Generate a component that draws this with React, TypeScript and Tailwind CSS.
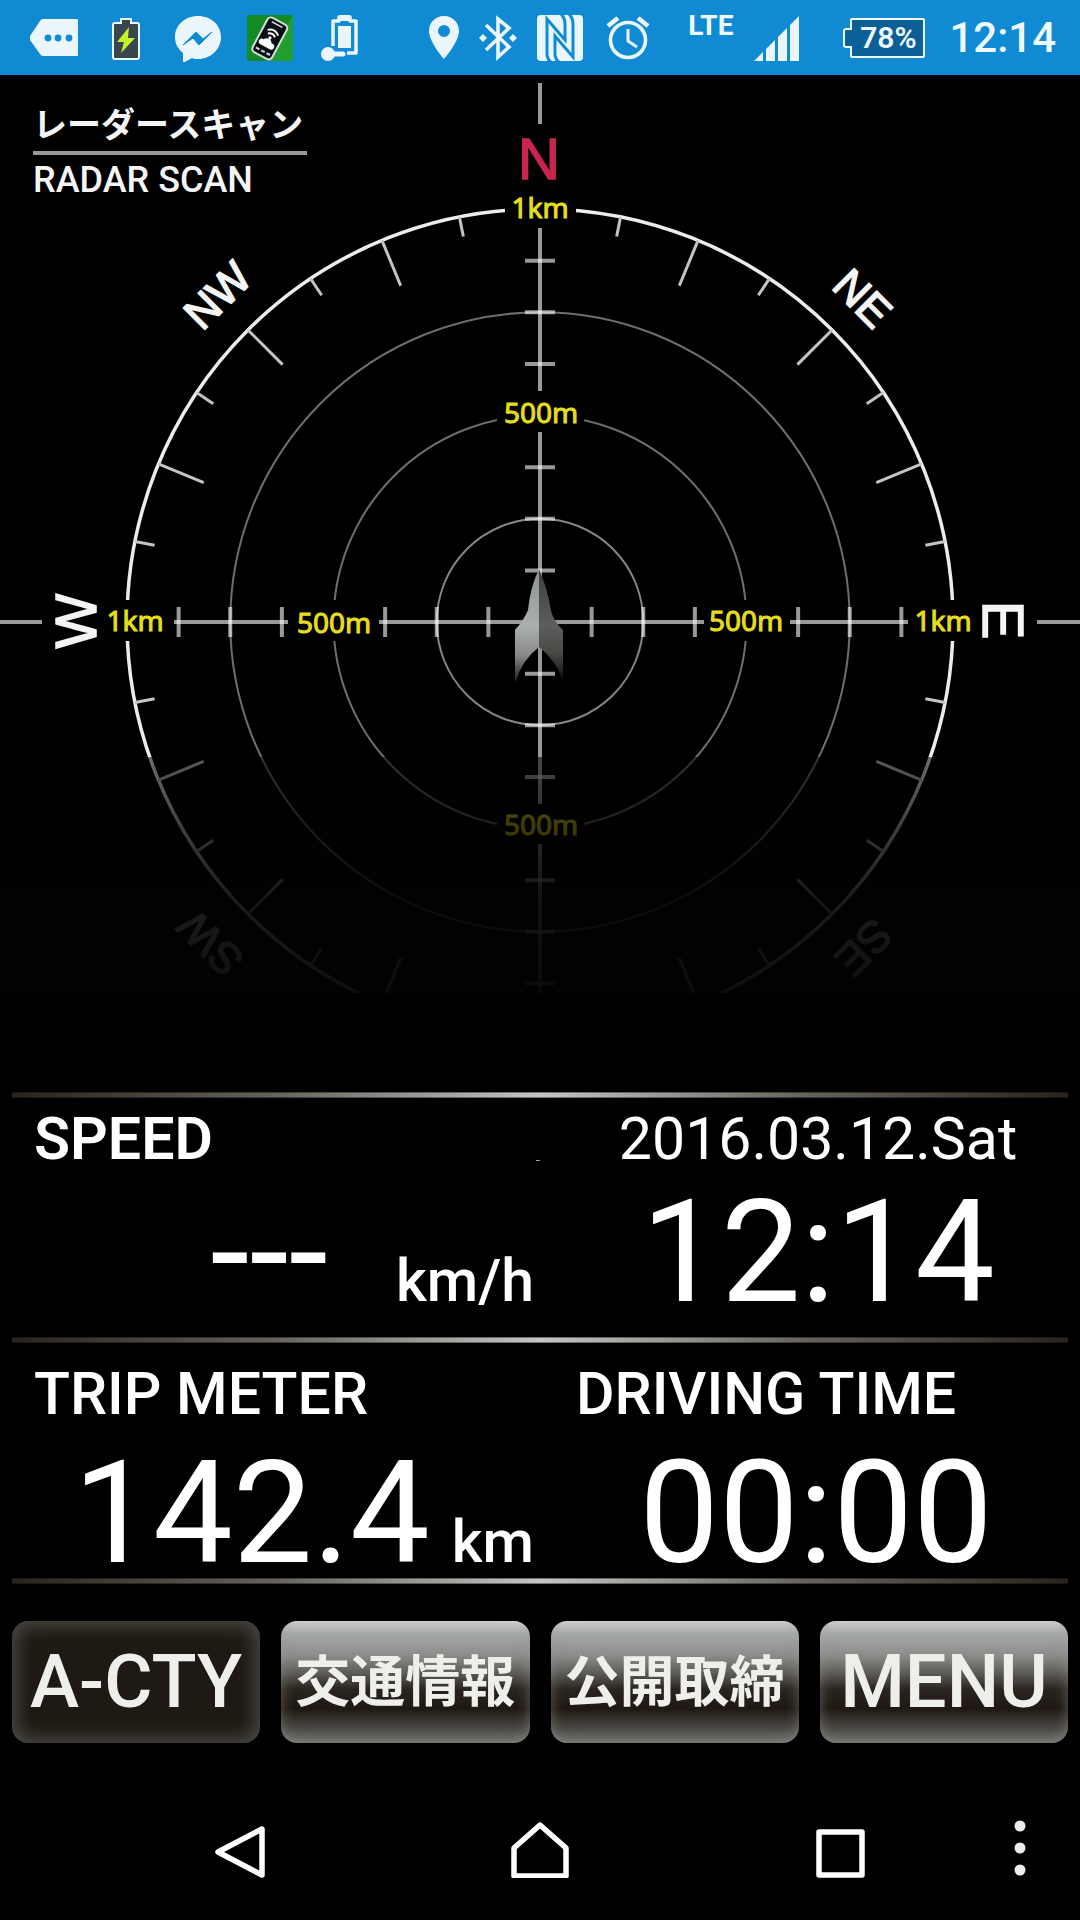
import { ReactNode } from 'react'

interface IconProps {
  children: ReactNode
  className?: string
}

const CX = 540
const CY = 622
const UNIT = 413 / 8

// Compass ticks between the four axes, every 11.25 degrees
const ringTicks = Array.from({ length: 32 }, (_, i) => i).filter(i => i % 8 !== 0)

// Range steps on each axis; step 4 and step 8 carry a label instead
const axisSteps = [1, 2, 3, 5, 6, 7]

const labelGaps = [
  { x: 505, y: 190, w: 71, h: 38 },
  { x: 497, y: 391, w: 87, h: 41 },
  { x: 497, y: 804, w: 87, h: 40 },
  { x: 42, y: 600, w: 132, h: 41 },
  { x: 288, y: 600, w: 91, h: 41 },
  { x: 704, y: 600, w: 86, h: 41 },
  { x: 908, y: 600, w: 129, h: 41 },
]

const rangeLabels = [
  { x: 540, y: 218, text: '1km' },
  { x: 541, y: 423, text: '500m' },
  { x: 541, y: 835, text: '500m' },
  { x: 135, y: 631, text: '1km' },
  { x: 334, y: 633, text: '500m' },
  { x: 746, y: 631, text: '500m' },
  { x: 943, y: 631, text: '1km' },
]

const headings = [
  { x: 75, y: 621, rotate: -90, size: 58, text: 'W' },
  { x: 1004, y: 620, rotate: 90, size: 58, text: 'E' },
  { x: 217, y: 295, rotate: -45, size: 44, text: 'NW' },
  { x: 863, y: 298, rotate: 45, size: 44, text: 'NE' },
  { x: 210, y: 944, rotate: -135, size: 44, text: 'SW' },
  { x: 864, y: 948, rotate: 135, size: 44, text: 'SE' },
]

function StatusIcon({ children, className = '' }: IconProps) {
  return (
    <svg viewBox="0 0 48 48" fill="#eaf6fc" className={`w-12 h-12 flex-shrink-0 ${className}`}>
      {children}
    </svg>
  )
}

function StatusBar() {
  return (
    <header className="flex items-center h-[75px] pl-[30px] pr-6 bg-[#108bd3] text-[#eef8fd]">
      <div className="flex items-center gap-6">
        {/* More notifications */}
        <StatusIcon>
          <path d="M13 5h33q3 0 3 3v31q0 3-3 3H13q-2 0-3-2L0 26q-1-2 0-4L10 7q1-2 3-2z" />
          <g fill="#108bd3">
            <circle cx="18" cy="24" r="3.4" />
            <circle cx="28" cy="24" r="3.4" />
            <circle cx="39" cy="24" r="3.4" />
          </g>
        </StatusIcon>
        {/* Charging */}
        <StatusIcon>
          <path d="M18 4h12v4h5q3 0 3 3v32q0 3-3 3H13q-3 0-3-3V11q0-3 3-3h5z" />
          <path d="M20 6h8v4h7q1 0 1 1v32q0 1-1 1H13q-1 0-1-1V11q0-1 1-1h7z" fill="#3a464d" />
          <path d="M27 13L15 28h7l-3 11 14-15h-7z" fill="#c5f02c" />
        </StatusIcon>
        {/* Messenger */}
        <StatusIcon>
          <path d="M24 2C11 2 1 11 1 23c0 7 3 12 8 16v10l9-5c2 1 4 1 6 1 13 0 23-10 23-22S37 2 24 2z" />
          <path d="M9 31l13-13 7 7 9-7-13 13-6-7z" fill="#108bd3" stroke="#108bd3" strokeWidth="1" />
        </StatusIcon>
        {/* Tethering app */}
        <StatusIcon>
          <rect x="1" y="1" width="46" height="46" rx="3" fill="#148a24" />
          <path d="M47 1v46H22z" fill="#2fb23a" opacity=".5" />
          <g transform="rotate(28 24 24)">
            <rect x="13" y="5" width="22" height="39" rx="4" fill="#0a0f14" stroke="#d4dcd8" strokeWidth="2" />
            <rect x="18" y="8" width="12" height="1.500" fill="#d4dcd8" />
            <path d="M18 18q6-5 12 0M20 21q4-3 8 0" fill="none" stroke="#fff" strokeWidth="2" />
            <circle cx="24" cy="24" r="1.600" />
            <path d="M18 34a3 3 0 0 1 1-6 5 5 0 0 1 9 0 3 3 0 0 1 2 6z" fill="#fff" />
            <path d="M16 39h4M22 39h4M28 39h4" stroke="#d4dcd8" strokeWidth="2" />
          </g>
        </StatusIcon>
        {/* Battery saver */}
        <StatusIcon>
          <path d="M15 32V7h6V3h11v4h6v32h-9" fill="none" stroke="#eaf6fc" strokeWidth="3.500" strokeLinejoin="round" />
          <rect x="21" y="1" width="11" height="6" rx="1" />
          <rect x="20" y="12" width="13" height="22" />
          <circle cx="10" cy="40" r="7" />
          <path d="M10 40h15" stroke="#eaf6fc" strokeWidth="5" strokeLinecap="round" />
        </StatusIcon>
      </div>

      <div className="flex items-center ml-auto">
        {/* Location */}
        <StatusIcon>
          <path
            fillRule="evenodd"
            d="M24 2C15 2 9 9 9 17c0 11 15 28 15 28s15-17 15-28C39 9 33 2 24 2zm0 9a6 6 0 1 1 0 12 6 6 0 0 1 0-12z"
          />
        </StatusIcon>
        {/* Bluetooth */}
        <StatusIcon className="ml-1.5">
          <path d="M12 11l23 22-11 10V5l11 9-23 22" fill="none" stroke="#eaf6fc" strokeWidth="3.600" />
          <path d="M9 20l4 4-4 4-4-4zM39 20l4 4-4 4-4-4z" />
        </StatusIcon>
        {/* NFC */}
        <StatusIcon className="ml-3.5">
          <rect x="1" y="1" width="46" height="46" rx="4" />
          <path
            d="M15 48q-4-3-4-8V5l18 21V10q0-6-4-10M33 0q4 4 4 10v33L19 22v18q0 5 4 8"
            fill="none"
            stroke="#108bd3"
            strokeWidth="3"
          />
        </StatusIcon>
        {/* Alarm */}
        <StatusIcon className="ml-5">
          <circle cx="24" cy="26" r="17.500" fill="none" stroke="#eaf6fc" strokeWidth="3.600" />
          <path d="M24 15v12l9 6" fill="none" stroke="#eaf6fc" strokeWidth="3" />
          <path d="M4 12l10-8M44 12L34 4" stroke="#eaf6fc" strokeWidth="4.500" />
        </StatusIcon>
        <span className="ml-9 mb-6 text-[28px] leading-[28px] font-bold">LTE</span>
        {/* Signal */}
        <StatusIcon className="ml-5">
          <path d="M1 47l9-9v9zM13 35l9-9v21H13zM25 23l9-9v33H25zM37 11l9-9v45H37z" />
        </StatusIcon>
        <div className="relative flex items-center justify-center w-[82px] h-10 pl-2 ml-[42px]">
          <svg viewBox="0 0 82 40" className="absolute inset-0" fill="#0a5f96" stroke="#eef8fd" strokeWidth="2">
            <path d="M8 2q0-1 1-1h71q1 0 1 1v36q0 1-1 1H9q-1 0-1-1V29H3q-2 0-2-2V13q0-2 2-2h5z" />
          </svg>
          <span className="relative text-[30px] leading-[30px] font-semibold">78%</span>
        </div>
        <time className="ml-6 text-[42px] leading-[42px] font-medium">12:14</time>
      </div>
    </header>
  )
}

function Radar() {
  return (
    <section className="relative">
      <div className="absolute left-[33px] top-6 w-[274px] font-medium text-[#f4f4f4]">
        <h1 className="pb-1 text-[34px] leading-[48px] font-bold whitespace-nowrap border-b-4 border-[#999] font-['Noto_Sans_CJK_JP',sans-serif]">
          レーダースキャン
        </h1>
        <p className="pt-1 text-[36px] leading-[42px]">RADAR SCAN</p>
      </div>

      <svg viewBox="0 75 1080 918" className="block w-full" textAnchor="middle">
        <defs>
          <linearGradient id="fade" x1="0" y1="0" x2="0" y2="1">
            <stop offset="0" stopColor="#030101" stopOpacity=".55" />
            <stop offset=".3" stopColor="#030101" stopOpacity=".74" />
            <stop offset=".6" stopColor="#030101" stopOpacity=".89" />
            <stop offset="1" stopColor="#030101" stopOpacity=".95" />
          </linearGradient>
          <linearGradient id="hullLeft" x1="0" y1="0" x2="0" y2="1">
            <stop offset="0" stopColor="#8d928f" />
            <stop offset=".5" stopColor="#a9b0ad" />
            <stop offset=".75" stopColor="#8b8b89" />
            <stop offset="1" stopColor="#1c1815" />
          </linearGradient>
          <linearGradient id="hullRight" x1="0" y1="0" x2="0" y2="1">
            <stop offset="0" stopColor="#3f3f3c" />
            <stop offset=".5" stopColor="#5c5e5c" />
            <stop offset=".75" stopColor="#4a4946" />
            <stop offset="1" stopColor="#0c0a08" />
          </linearGradient>
        </defs>

        {/* Range rings */}
        <g fill="none">
          <circle cx={CX} cy={CY} r={UNIT * 8} stroke="#ececec" strokeWidth="3.500" />
          <g stroke="#6e6e6e" strokeWidth="2">
            <circle cx={CX} cy={CY} r={UNIT * 6} />
            <circle cx={CX} cy={CY} r={UNIT * 4} />
            <circle cx={CX} cy={CY} r={UNIT * 2} stroke="#858585" />
          </g>
        </g>
        <g stroke="#c4c4c4" strokeWidth="3">
          {ringTicks.map(i => (
            <line
              key={i}
              x1={CX}
              x2={CX}
              y1={CY - UNIT * 8}
              y2={CY - UNIT * 8 + (i % 2 === 0 ? 49 : 20)}
              transform={`rotate(${i * 11.25} ${CX} ${CY})`}
            />
          ))}
        </g>
        {labelGaps.map(g => (
          <rect key={`${g.x}-${g.y}`} x={g.x} y={g.y} width={g.w} height={g.h} fill="#000" />
        ))}

        {/* Axes */}
        <g stroke="#fff" strokeOpacity=".6" strokeWidth="4">
          <path d="M540 83V124M540 228V391M540 432V804M540 844V993" />
          <path d="M0 622H42M174 622H288M379 622H704M790 622H908M1037 622H1080" />
          {axisSteps.map(n => (
            <path
              key={n}
              d={`M525 ${CY - n * UNIT}h30M525 ${CY + n * UNIT}h30M${CX - n * UNIT} 607v30M${CX + n * UNIT} 607v30`}
            />
          ))}
        </g>

        <g strokeWidth="1.500" className="font-['Liberation_Sans',sans-serif]">
          <text x="539" y="179" fontSize="58" fill="#c8254f" stroke="#c8254f">
            N
          </text>
          <g fill="#f4f4f4" stroke="#f4f4f4">
            {headings.map(h => (
              <text
                key={h.text}
                fontSize={h.size}
                transform={`translate(${h.x} ${h.y}) rotate(${h.rotate})`}
                dy=".36em"
              >
                {h.text}
              </text>
            ))}
          </g>
        </g>
        <g fill="#e6de1c" stroke="#e6de1c" strokeWidth="1" fontSize="28" className="font-['Noto_Sans',sans-serif]">
          {rangeLabels.map(l => (
            <text key={`${l.x}-${l.y}`} x={l.x} y={l.y}>
              {l.text}
            </text>
          ))}
        </g>

        {/* Own position */}
        <path d="M539 569Q530 588 528 610Q524 620 515 630V683Q522 660 539 647z" fill="url(#hullLeft)" />
        <path d="M539 569Q548 590 551 611Q554 622 563 630V681Q556 660 539 647z" fill="url(#hullRight)" />

        <rect x="0" y="757" width="1080" height="236" fill="url(#fade)" />
      </svg>
    </section>
  )
}

function Divider() {
  return (
    <div className="h-1.5 mx-3 bg-[linear-gradient(90deg,#2a231b,#66635d_25%,#c4c6c4_50%,#66635d_75%,#2a231b)] border-y border-black/40" />
  )
}

interface ReadoutProps {
  title: ReactNode
  value: string
  unit: string
  unitGap: string
}

function LeftReadout({ title, value, unit, unitGap }: ReadoutProps) {
  return (
    <div className="flex flex-col justify-between pl-[22px]">
      {title}
      <p className="flex items-baseline justify-end pr-1.5">
        <span className="text-[142px] leading-[120px]">{value}</span>
        <span className={`text-[59px] leading-[60px] font-medium ${unitGap}`}>{unit}</span>
      </p>
    </div>
  )
}

function Readouts() {
  return (
    <section className="mt-[99px]">
      <Divider />
      <div className="grid grid-cols-2 h-[239px] px-3 pt-[11px] pb-6">
        <LeftReadout
          title={
            <div className="flex items-end justify-between">
              <h2 className="text-[59px] leading-[60px] font-semibold">SPEED</h2>
              <span className="w-1 h-px mb-2 bg-gray-400" />
            </div>
          }
          value="---"
          unit="km/h"
          unitGap="ml-[68px]"
        />
        <div className="flex flex-col justify-between items-center pl-7">
          <p className="text-[59px] leading-[60px]">2016.03.12.Sat</p>
          <time className="text-[142px] leading-[120px]">12:14</time>
        </div>
      </div>
      <Divider />
      <div className="grid grid-cols-2 h-[235px] px-3 pt-[21px] pb-1">
        <LeftReadout
          title={<h2 className="text-[59px] leading-[60px] font-medium">TRIP METER</h2>}
          value="142.4"
          unit="km"
          unitGap="ml-[22px]"
        />
        <div className="flex flex-col justify-between">
          <h2 className="pl-9 text-[59px] leading-[60px] font-medium">DRIVING TIME</h2>
          <time className="pl-6 text-center text-[142px] leading-[120px]">00:00</time>
        </div>
      </div>
      <Divider />
    </section>
  )
}

const glossy =
  'bg-[linear-gradient(180deg,#dcdada_0%,#a6aaa8_10%,#8c8d8a_28%,#605e5a_42%,#2a241e_56%,#1e1811_72%,#45423e_86%,#6c6e6a_100%)] shadow-[inset_0_0_14px_rgba(160,160,155,0.5)]'
const pressed = 'bg-[#1e1912] shadow-[inset_0_0_18px_5px_#4b4a46]'

const menuButtons = [
  { label: 'A-CTY', look: pressed, text: 'text-[74px] font-medium' },
  { label: '交通情報', look: glossy, text: 'text-[55px] font-bold' },
  { label: '公開取締', look: glossy, text: 'text-[55px] font-bold' },
  { label: 'MENU', look: glossy, text: 'text-[74px] font-medium' },
]

function MenuButtons() {
  return (
    <div className="grid grid-cols-4 gap-[21px] px-3 pt-[37px]">
      {menuButtons.map(b => (
        <button
          key={b.label}
          className={`h-[122px] rounded-2xl leading-none whitespace-nowrap text-[#eeefea] ${b.text} ${b.look}`}
        >
          {b.label}
        </button>
      ))}
    </div>
  )
}

function NavBar() {
  return (
    <nav className="grid grid-cols-[10fr_10fr_10fr_2fr] h-36 mt-auto pl-[90px] pr-[30px]">
      <button aria-label="Back" className="flex items-center justify-center">
        <svg viewBox="0 0 60 60" className="w-[60px] h-[60px]" fill="none" stroke="#fff" strokeWidth="5.500" strokeLinejoin="round">
          <path d="M52 11v46L8 34z" />
        </svg>
      </button>
      <button aria-label="Home" className="flex items-center justify-center">
        <svg viewBox="0 0 60 60" className="w-[60px] h-[60px]" fill="none" stroke="#fff" strokeWidth="5.500" strokeLinejoin="round">
          <path d="M30 7l26 23v28H4V30z" />
        </svg>
      </button>
      <button aria-label="Recent apps" className="flex items-center justify-center">
        <svg viewBox="0 0 60 60" className="w-[60px] h-[60px]" fill="none" stroke="#fff" strokeWidth="5.500" strokeLinejoin="round">
          <path d="M9 14h43v43H9z" />
        </svg>
      </button>
      <button aria-label="More options" className="flex items-center justify-center">
        <svg viewBox="0 0 60 60" className="w-[60px] h-[60px]" fill="#ececec">
          <circle cx="30" cy="8" r="5.500" />
          <circle cx="30" cy="30" r="5.500" />
          <circle cx="30" cy="52" r="5.500" />
        </svg>
      </button>
    </nav>
  )
}

export default function App() {
  return (
    <main className="flex flex-col min-h-screen bg-black text-white font-[Roboto,'Noto_Sans_CJK_JP',sans-serif]">
      <StatusBar />
      <Radar />
      <Readouts />
      <MenuButtons />
      <NavBar />
    </main>
  )
}
